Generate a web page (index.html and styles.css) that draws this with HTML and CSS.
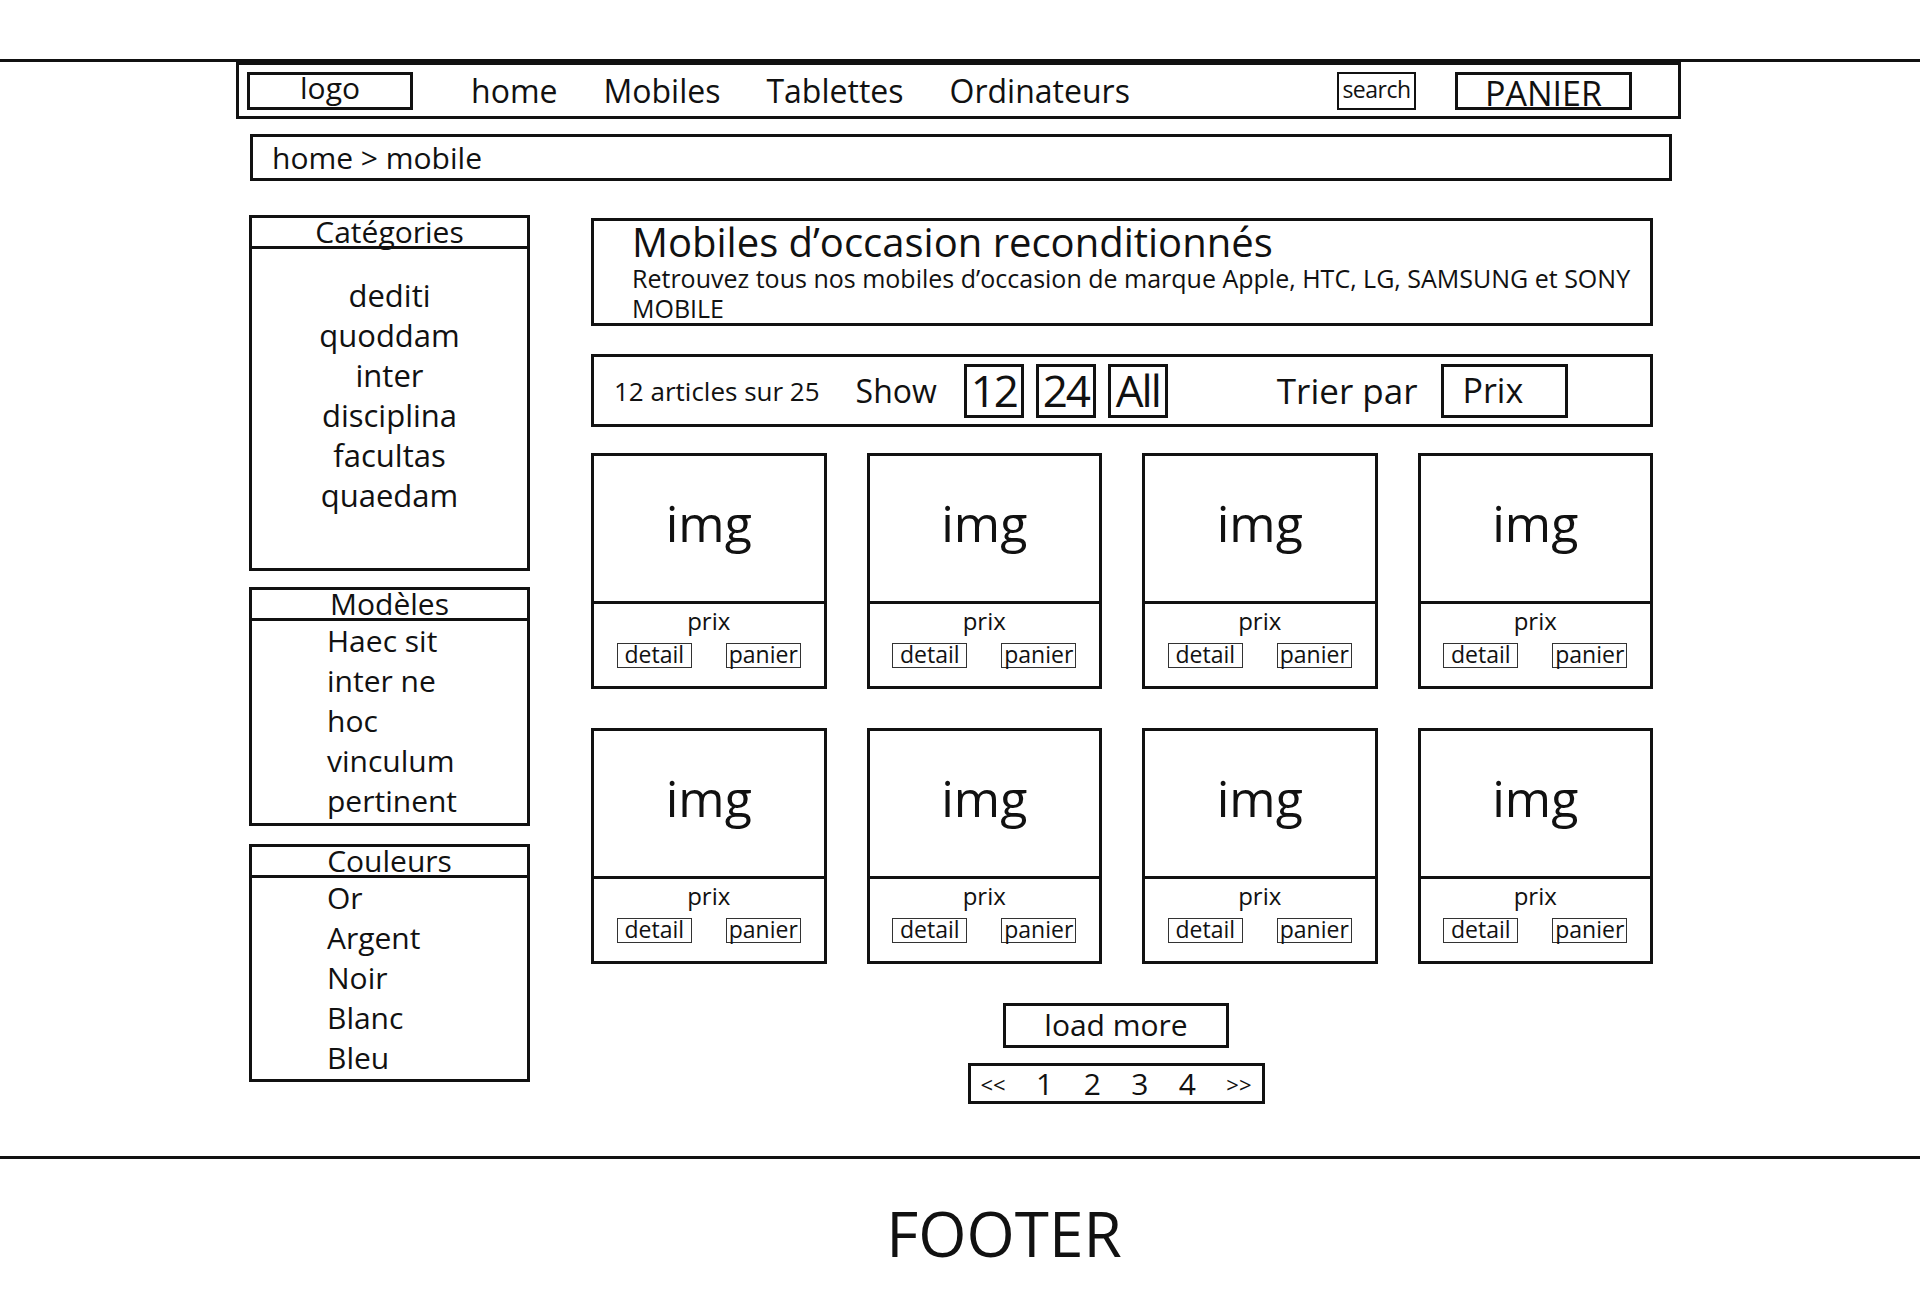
FILE: index.html
```html
<!DOCTYPE html>
<html lang="fr">
<head>
    <meta charset="UTF-8">
    <title>Mobiles d'occasion</title>
    <link rel="stylesheet" href="styles.css">
</head>
<body>
    <div class="top-line"></div>

    <div class="wrap">
        <!-- Header Section -->
        <header class="site-header">
            <div class="logo">logo</div>
            <nav>
                <a href="#">home</a>
                <a href="#">Mobiles</a>
                <a href="#">Tablettes</a>
                <a href="#">Ordinateurs</a>
            </nav>
            <div class="search-box">search</div>
            <div class="cart-box">PANIER</div>
        </header>

        <!-- Breadcrumb -->
        <div class="breadcrumb">home &gt; mobile</div>

        <div class="layout">
            <!-- Sidebar -->
            <aside class="sidebar">
                <div class="side-box categories">
                    <h3>Catégories</h3>
                    <ul>
                        <li>dediti</li>
                        <li>quoddam</li>
                        <li>inter</li>
                        <li>disciplina</li>
                        <li>facultas</li>
                        <li>quaedam</li>
                    </ul>
                </div>
                <div class="side-box models">
                    <h3>Modèles</h3>
                    <ul>
                        <li>Haec sit</li>
                        <li>inter ne</li>
                        <li>hoc</li>
                        <li>vinculum</li>
                        <li>pertinent</li>
                    </ul>
                </div>
                <div class="side-box colors">
                    <h3>Couleurs</h3>
                    <ul>
                        <li>Or</li>
                        <li>Argent</li>
                        <li>Noir</li>
                        <li>Blanc</li>
                        <li>Bleu</li>
                    </ul>
                </div>
            </aside>

            <!-- Main Content -->
            <main class="content">
                <div class="title-box">
                    <h1>Mobiles d’occasion reconditionnés</h1>
                    <p>Retrouvez tous nos mobiles d’occasion de marque Apple, HTC, LG, SAMSUNG et SONY<br>MOBILE</p>
                </div>

                <div class="toolbar">
                    <span class="count">12 articles sur 25</span>
                    <span class="show">Show</span>
                    <span class="show-btn">12</span>
                    <span class="show-btn">24</span>
                    <span class="show-btn">All</span>
                    <span class="sort-label">Trier par</span>
                    <span class="sort-box">Prix</span>
                </div>

                <div class="product-grid">
                    <div class="card">
                        <div class="card-img">img</div>
                        <div class="card-info">
                            <div class="price">prix</div>
                            <div class="card-actions"><span>detail</span><span>panier</span></div>
                        </div>
                    </div>
                    <div class="card">
                        <div class="card-img">img</div>
                        <div class="card-info">
                            <div class="price">prix</div>
                            <div class="card-actions"><span>detail</span><span>panier</span></div>
                        </div>
                    </div>
                    <div class="card">
                        <div class="card-img">img</div>
                        <div class="card-info">
                            <div class="price">prix</div>
                            <div class="card-actions"><span>detail</span><span>panier</span></div>
                        </div>
                    </div>
                    <div class="card">
                        <div class="card-img">img</div>
                        <div class="card-info">
                            <div class="price">prix</div>
                            <div class="card-actions"><span>detail</span><span>panier</span></div>
                        </div>
                    </div>
                    <div class="card">
                        <div class="card-img">img</div>
                        <div class="card-info">
                            <div class="price">prix</div>
                            <div class="card-actions"><span>detail</span><span>panier</span></div>
                        </div>
                    </div>
                    <div class="card">
                        <div class="card-img">img</div>
                        <div class="card-info">
                            <div class="price">prix</div>
                            <div class="card-actions"><span>detail</span><span>panier</span></div>
                        </div>
                    </div>
                    <div class="card">
                        <div class="card-img">img</div>
                        <div class="card-info">
                            <div class="price">prix</div>
                            <div class="card-actions"><span>detail</span><span>panier</span></div>
                        </div>
                    </div>
                    <div class="card">
                        <div class="card-img">img</div>
                        <div class="card-info">
                            <div class="price">prix</div>
                            <div class="card-actions"><span>detail</span><span>panier</span></div>
                        </div>
                    </div>
                </div>

                <div class="pager">
                    <div class="load-more">load more</div>
                    <div class="pagination">
                        <span class="arrow">&lt;&lt;</span>
                        <span>1</span>
                        <span>2</span>
                        <span>3</span>
                        <span>4</span>
                        <span class="arrow">&gt;&gt;</span>
                    </div>
                </div>
            </main>
        </div>
    </div>

    <!-- Footer -->
    <footer class="site-footer">FOOTER</footer>
</body>
</html>
```

FILE: styles.css
```css
/* Global Styles */
* {
    margin: 0;
    padding: 0;
    box-sizing: border-box;
}

body {
    font-family: "Comic Sans MS", "Open Sans", sans-serif;
    background-color: #fff;
    color: #111;
}

ul {
    list-style: none;
}

.top-line {
    height: 62px;
    border-bottom: 3px solid #111;
}

.wrap {
    width: 1445px;
    margin-left: 236px;
}

/* Header */
.site-header {
    display: flex;
    align-items: center;
    height: 57px;
    border: 3px solid #111;
}

.logo {
    width: 166px;
    height: 38px;
    margin-left: 8px;
    border: 3px solid #111;
    font-size: 30px;
    line-height: 26px;
    text-align: center;
}

nav {
    display: flex;
    gap: 46px;
    margin-left: 58px;
}

nav a {
    text-decoration: none;
    color: #111;
    font-size: 32px;
}

.search-box {
    width: 79px;
    height: 38px;
    margin-left: auto;
    border: 2px solid #111;
    font-size: 23px;
    line-height: 30px;
    text-align: center;
    white-space: nowrap;
    letter-spacing: -0.5px;
}

.cart-box {
    width: 177px;
    height: 38px;
    margin-left: 39px;
    margin-right: 46px;
    border: 3px solid #111;
    font-size: 34px;
    line-height: 36px;
    text-align: center;
}

/* Breadcrumb */
.breadcrumb {
    height: 47px;
    margin: 15px 9px 0 14px;
    padding-left: 19px;
    border: 3px solid #111;
    font-size: 30px;
    line-height: 41px;
}

.layout {
    display: flex;
    align-items: flex-start;
    margin-top: 34px;
}

/* Sidebar */
.sidebar {
    width: 281px;
    margin-left: 13px;
}

.side-box {
    border: 3px solid #111;
}

.side-box h3 {
    height: 31px;
    border-bottom: 3px solid #111;
    font-size: 30px;
    font-weight: normal;
    line-height: 28px;
    text-align: center;
}

.side-box li {
    font-size: 30px;
    line-height: 40px;
}

.categories ul {
    padding: 26px 0 53px;
    text-align: center;
}

.categories li {
    font-size: 31px;
}

.models {
    margin-top: 16px;
}

.colors {
    margin-top: 18px;
}

.models ul, .colors ul {
    padding: 0 0 1px 75px;
}

.models ul {
    padding-bottom: 2px;
}

/* Main Content */
.content {
    width: 1062px;
    margin-left: 61px;
    margin-top: 3px;
}

.title-box {
    height: 108px;
    padding-left: 38px;
    border: 3px solid #111;
}

.title-box h1 {
    font-size: 40px;
    font-weight: normal;
    line-height: 42px;
}

.title-box p {
    font-size: 25px;
    line-height: 30px;
}

.toolbar {
    display: flex;
    align-items: center;
    height: 73px;
    margin-top: 28px;
    padding-left: 20px;
    border: 3px solid #111;
}

.count {
    font-size: 26px;
}

.show {
    margin-left: 36px;
    margin-right: 27px;
    font-size: 32px;
}

.show-btn {
    width: 60px;
    height: 54px;
    margin-right: 12px;
    border: 3px solid #111;
    font-size: 44px;
    line-height: 46px;
    text-align: center;
    letter-spacing: -2px;
}

.sort-label {
    margin-left: 97px;
    font-size: 35px;
}

.sort-box {
    width: 127px;
    height: 54px;
    margin-left: 24px;
    padding-left: 18px;
    border: 3px solid #111;
    font-size: 34px;
    line-height: 46px;
}

/* Product Grid */
.product-grid {
    display: grid;
    grid-template-columns: repeat(4, 1fr);
    column-gap: 40px;
    row-gap: 39px;
    margin-top: 26px;
}

.card {
    height: 236px;
    border: 3px solid #111;
}

.card-img {
    height: 148px;
    border-bottom: 3px solid #111;
    font-size: 50px;
    line-height: 135px;
    text-align: center;
}

.card-info {
    padding-top: 4px;
    text-align: center;
}

.price {
    font-size: 24px;
    line-height: 26px;
}

.card-actions {
    display: flex;
    justify-content: center;
    gap: 34px;
    margin-top: 9px;
}

.card-actions span {
    width: 75px;
    height: 25px;
    border: 1px solid #333;
    font-size: 23px;
    line-height: 21px;
    white-space: nowrap;
}

/* Pager */
.pager {
    display: flex;
    flex-direction: column;
    align-items: center;
    width: 1050px;
}

.load-more {
    width: 226px;
    height: 45px;
    margin-top: 39px;
    border: 3px solid #111;
    font-size: 30px;
    line-height: 37px;
    text-align: center;
}

.pagination {
    display: flex;
    align-items: center;
    justify-content: space-between;
    width: 297px;
    height: 41px;
    margin-top: 15px;
    padding: 0 10px;
    border: 3px solid #111;
    font-size: 30px;
}

.pagination .arrow {
    font-size: 22px;
}

/* Footer */
.site-footer {
    margin-top: 52px;
    padding: 43px 0 37px 88px;
    border-top: 3px solid #111;
    font-size: 62px;
    line-height: 62px;
    text-align: center;
}
```
